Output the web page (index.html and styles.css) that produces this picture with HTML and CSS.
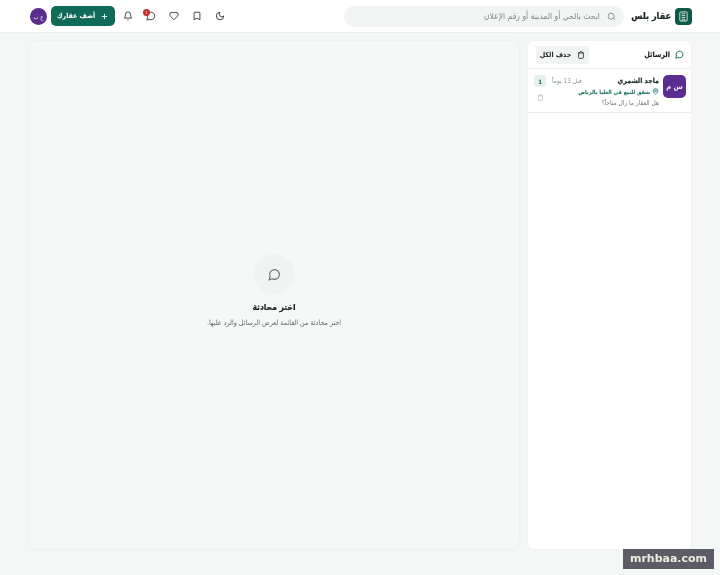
FILE: index.html
```html
<!DOCTYPE html>
<html lang="ar" dir="rtl">
<head>
<meta charset="utf-8">
<title>الرسائل</title>
<link rel="stylesheet" href="styles.css">
</head>
<body>
<header class="topbar">
  <div class="brand">
    <span class="brand-icon"><svg width="11" height="11" viewBox="0 0 24 24" fill="none" stroke="#d5e8e0" stroke-width="2"><rect x="4" y="2" width="16" height="20" rx="2"/><path d="M9 22v-4h6v4M8 6h8M8 10h8M8 14h8"/></svg></span>
    <span class="brand-name">عقار بلس</span>
  </div>
  <div class="search">
    <svg width="9" height="9" viewBox="0 0 24 24" fill="none" stroke="#7f8a8a" stroke-width="2.4"><circle cx="11" cy="11" r="8"/><path d="m21 21-4.3-4.3"/></svg>
    <span>ابحث بالحي أو المدينة أو رقم الإعلان</span>
  </div>
  <nav class="actions">
    <button class="icon-btn"><svg viewBox="0 0 24 24"><path d="M12 3a6 6 0 0 0 9 9 9 9 0 1 1-9-9Z"/></svg></button>
    <button class="icon-btn"><svg viewBox="0 0 24 24"><path d="m19 21-7-4-7 4V5a2 2 0 0 1 2-2h10a2 2 0 0 1 2 2v16z"/></svg></button>
    <button class="icon-btn"><svg viewBox="0 0 24 24"><path d="M19 14c1.5-1.500 3-3.200 3-5.500A5.500 5.500 0 0 0 16.500 3c-1.800 0-3 .5-4.500 2-1.500-1.500-2.700-2-4.500-2A5.500 5.500 0 0 0 2 8.500c0 2.300 1.500 4 3 5.500l7 7Z"/></svg></button>
    <button class="icon-btn chat-btn"><svg viewBox="0 0 24 24"><path d="M7.900 20A9 9 0 1 0 4 16.100L2 22Z"/></svg><span class="badge">1</span></button>
    <button class="icon-btn"><svg viewBox="0 0 24 24"><path d="M6 8a6 6 0 0 1 12 0c0 7 3 9 3 9H3s3-2 3-9"/><path d="M10.300 21a1.940 1.940 0 0 0 3.400 0"/></svg></button>
    <button class="add-btn"><svg width="9" height="9" viewBox="0 0 24 24" fill="none" stroke="#fff" stroke-width="2.500"><path d="M5 12h14M12 5v14"/></svg><span>أضف عقارك</span></button>
    <span class="avatar">ع ب</span>
  </nav>
</header>
<main class="layout">
  <aside class="sidebar">
    <div class="side-head">
      <div class="side-title">
        <svg width="9" height="9" viewBox="0 0 24 24" fill="none" stroke="#0f6b57" stroke-width="2.500"><path d="M7.900 20A9 9 0 1 0 4 16.100L2 22Z"/></svg>
        <span>الرسائل</span>
      </div>
      <button class="clear-btn"><svg width="8" height="8" viewBox="0 0 24 24" fill="none" stroke="#1f2a2a" stroke-width="2.500"><path d="M3 6h18M19 6v14a2 2 0 0 1-2 2H7a2 2 0 0 1-2-2V6M8 6V4a2 2 0 0 1 2-2h4a2 2 0 0 1 2 2v2"/></svg><span>حذف الكل</span></button>
    </div>
    <article class="convo">
      <span class="convo-avatar">س م</span>
      <div class="convo-body">
        <div class="convo-top"><strong>ماجد الشمري</strong><time>قبل 13 يوماً</time></div>
        <div class="convo-prop"><svg width="7" height="7" viewBox="0 0 24 24" fill="none" stroke="#0f6b57" stroke-width="2.500"><path d="M20 10c0 6-8 12-8 12s-8-6-8-12a8 8 0 0 1 16 0Z"/><circle cx="12" cy="10" r="3"/></svg><span>شقق للبيع في العليا بالرياض</span></div>
        <div class="convo-msg">هل العقار ما زال متاحاً؟</div>
      </div>
      <div class="convo-side">
        <span class="count">1</span>
        <svg width="7" height="7" viewBox="0 0 24 24" fill="none" stroke="#a9b2b2" stroke-width="2"><path d="M3 6h18M19 6v14a2 2 0 0 1-2 2H7a2 2 0 0 1-2-2V6M8 6V4a2 2 0 0 1 2-2h4a2 2 0 0 1 2 2v2"/></svg>
      </div>
    </article>
  </aside>
  <section class="panel">
    <div class="empty-icon"><svg width="13" height="13" viewBox="0 0 24 24" fill="none" stroke="#5f6b6b" stroke-width="2"><path d="M7.900 20A9 9 0 1 0 4 16.100L2 22Z"/></svg></div>
    <h2>اختر محادثة</h2>
    <p>اختر محادثة من القائمة لعرض الرسائل والرد عليها.</p>
  </section>
</main>
<div class="watermark">mrhbaa.com</div>
</body>
</html>
```
FILE: styles.css
```css
* { box-sizing: border-box; }
html, body { height: 100%; }
body {
  margin: 0;
  width: 720px;
  height: 575px;
  overflow: hidden;
  background: #f5f7f7;
  color: #1a2424;
  font-family: "DejaVu Sans", "Liberation Sans", sans-serif;
  font-stretch: condensed;
  position: relative;
}
button { font: inherit; border: 0; background: none; padding: 0; color: inherit; }
.topbar, .layout, .watermark { filter: blur(.3px); }
.topbar {
  height: 33px;
  background: #fff;
  border-bottom: 1px solid #edf0f0;
  display: flex;
  align-items: center;
  padding: 0 28px 0 30px;
}
.brand { display: flex; align-items: center; gap: 4px; width: 60px; flex: none; margin-left: 8px; white-space: nowrap; }
.brand-icon {
  width: 17px; height: 17px; border-radius: 4px; background: #0d5a49; flex: none;
  display: flex; align-items: center; justify-content: center;
}
.brand-name { font-size: 9px; font-weight: 700; line-height: 17px; white-space: nowrap; -webkit-text-stroke: .2px #1a2424; }
.search {
  width: 280px; height: 21px; border-radius: 11px; background: #f1f4f3;
  display: flex; align-items: center; gap: 7px; padding: 0 8px;
  font-size: 8.500px; color: #7f8a8a; white-space: nowrap;
}
.actions { display: flex; align-items: center; margin-right: auto; }
.icon-btn {
  width: 23px; height: 20px; display: flex; align-items: center; justify-content: center; position: relative;
}
.icon-btn svg { width: 10px; height: 10px; fill: none; stroke: #2e3838; stroke-width: 2.200; }
.badge {
  position: absolute; top: 3px; left: 4px; width: 7px; height: 7px; border-radius: 50%;
  background: #c62f2f; color: #fff; font-size: 4px; line-height: 7px; text-align: center;
}
.add-btn {
  width: 64px; height: 20px; border-radius: 5px; background: #0f6b57; color: #fff;
  display: flex; align-items: center; justify-content: center; gap: 5px;
  font-size: 7px; font-weight: 700; margin: 0 1px 0 4px; white-space: nowrap;
}
.avatar {
  width: 17px; height: 17px; border-radius: 50%; background: #5b2d91; color: #e8dff2;
  font-size: 6px; display: flex; align-items: center; justify-content: center; white-space: nowrap;
}
.layout {
  display: flex; gap: 9px; height: 508px; margin: 8px 29px 0 29px;
}
.sidebar {
  width: 163px; background: #fff; border-radius: 6px; box-shadow: 0 0 2px rgba(20,40,40,.06);
  flex: none;
}
.side-head {
  height: 28px; display: flex; align-items: center; justify-content: space-between;
  padding: 0 7px 0 8px; border-bottom: 1px solid #edf0f0;
}
.side-title { display: flex; align-items: center; gap: 5px; font-size: 7.200px; font-weight: 700; white-space: nowrap; -webkit-text-stroke: .15px #1a2424; }
.clear-btn {
  width: 53px; height: 18px; background: #f1f4f3; border-radius: 3px;
  display: flex; align-items: center; justify-content: center; gap: 6px;
  font-size: 7px; font-weight: 700; white-space: nowrap;
}
.convo {
  height: 44px; display: flex; gap: 4px; padding: 6px 5px 0 5px; border-bottom: 1px solid #e7ebeb;
}
.convo-avatar {
  width: 23px; height: 23px; border-radius: 5px; background: #5b2d91; color: #eee4f7;
  font-size: 7.500px; font-weight: 700; display: flex; align-items: center; justify-content: center; flex: none; white-space: nowrap;
}
.convo-body { flex: 1; min-width: 0; }
.convo-top { display: flex; justify-content: space-between; align-items: center; height: 11px; }
.convo-top strong { font-size: 7px; font-weight: 700; white-space: nowrap; -webkit-text-stroke: .15px #1a2424; }
.convo-top time { font-size: 6.500px; color: #8d9898; white-space: nowrap; margin-left: 2px; }
.convo-prop { display: flex; align-items: center; gap: 2px; height: 11px; font-size: 5.600px; font-weight: 700; color: #0f6b57; white-space: nowrap; }
.convo-msg { font-size: 6.500px; color: #6e7979; height: 10px; line-height: 10px; white-space: nowrap; margin-top: 1px; }
.convo-side { width: 12px; display: flex; flex-direction: column; align-items: center; gap: 7px; flex: none; margin-left: 1px; }
.count {
  width: 12px; height: 12px; background: #e6f0ed; border-radius: 3px; color: #0f6b57;
  font-size: 6px; font-weight: 700; display: flex; align-items: center; justify-content: center;
}
.panel {
  flex: 1; background: #f6f8f7; border-radius: 6px; box-shadow: 0 0 2px rgba(20,40,40,.08);
  display: flex; flex-direction: column; align-items: center; padding-top: 213px;
}
.empty-icon {
  width: 40px; height: 40px; border-radius: 50%; background: #eff3f2;
  display: flex; align-items: center; justify-content: center;
}
.panel h2 { margin: 6px 0 0; font-size: 8.500px; line-height: 14px; font-weight: 700; -webkit-text-stroke: .15px #1a2424; }
.panel p { margin: 3px 0 0; font-size: 7.100px; line-height: 12px; color: #5f6b6b; }
.watermark {
  position: absolute; left: 623px; top: 549px; width: 91px; height: 20px;
  background: #5c5c66; color: #efecde; font-family: "DejaVu Sans", sans-serif; font-stretch: normal;
  font-size: 11px; font-weight: 700; line-height: 20px; text-align: center;
}
```
